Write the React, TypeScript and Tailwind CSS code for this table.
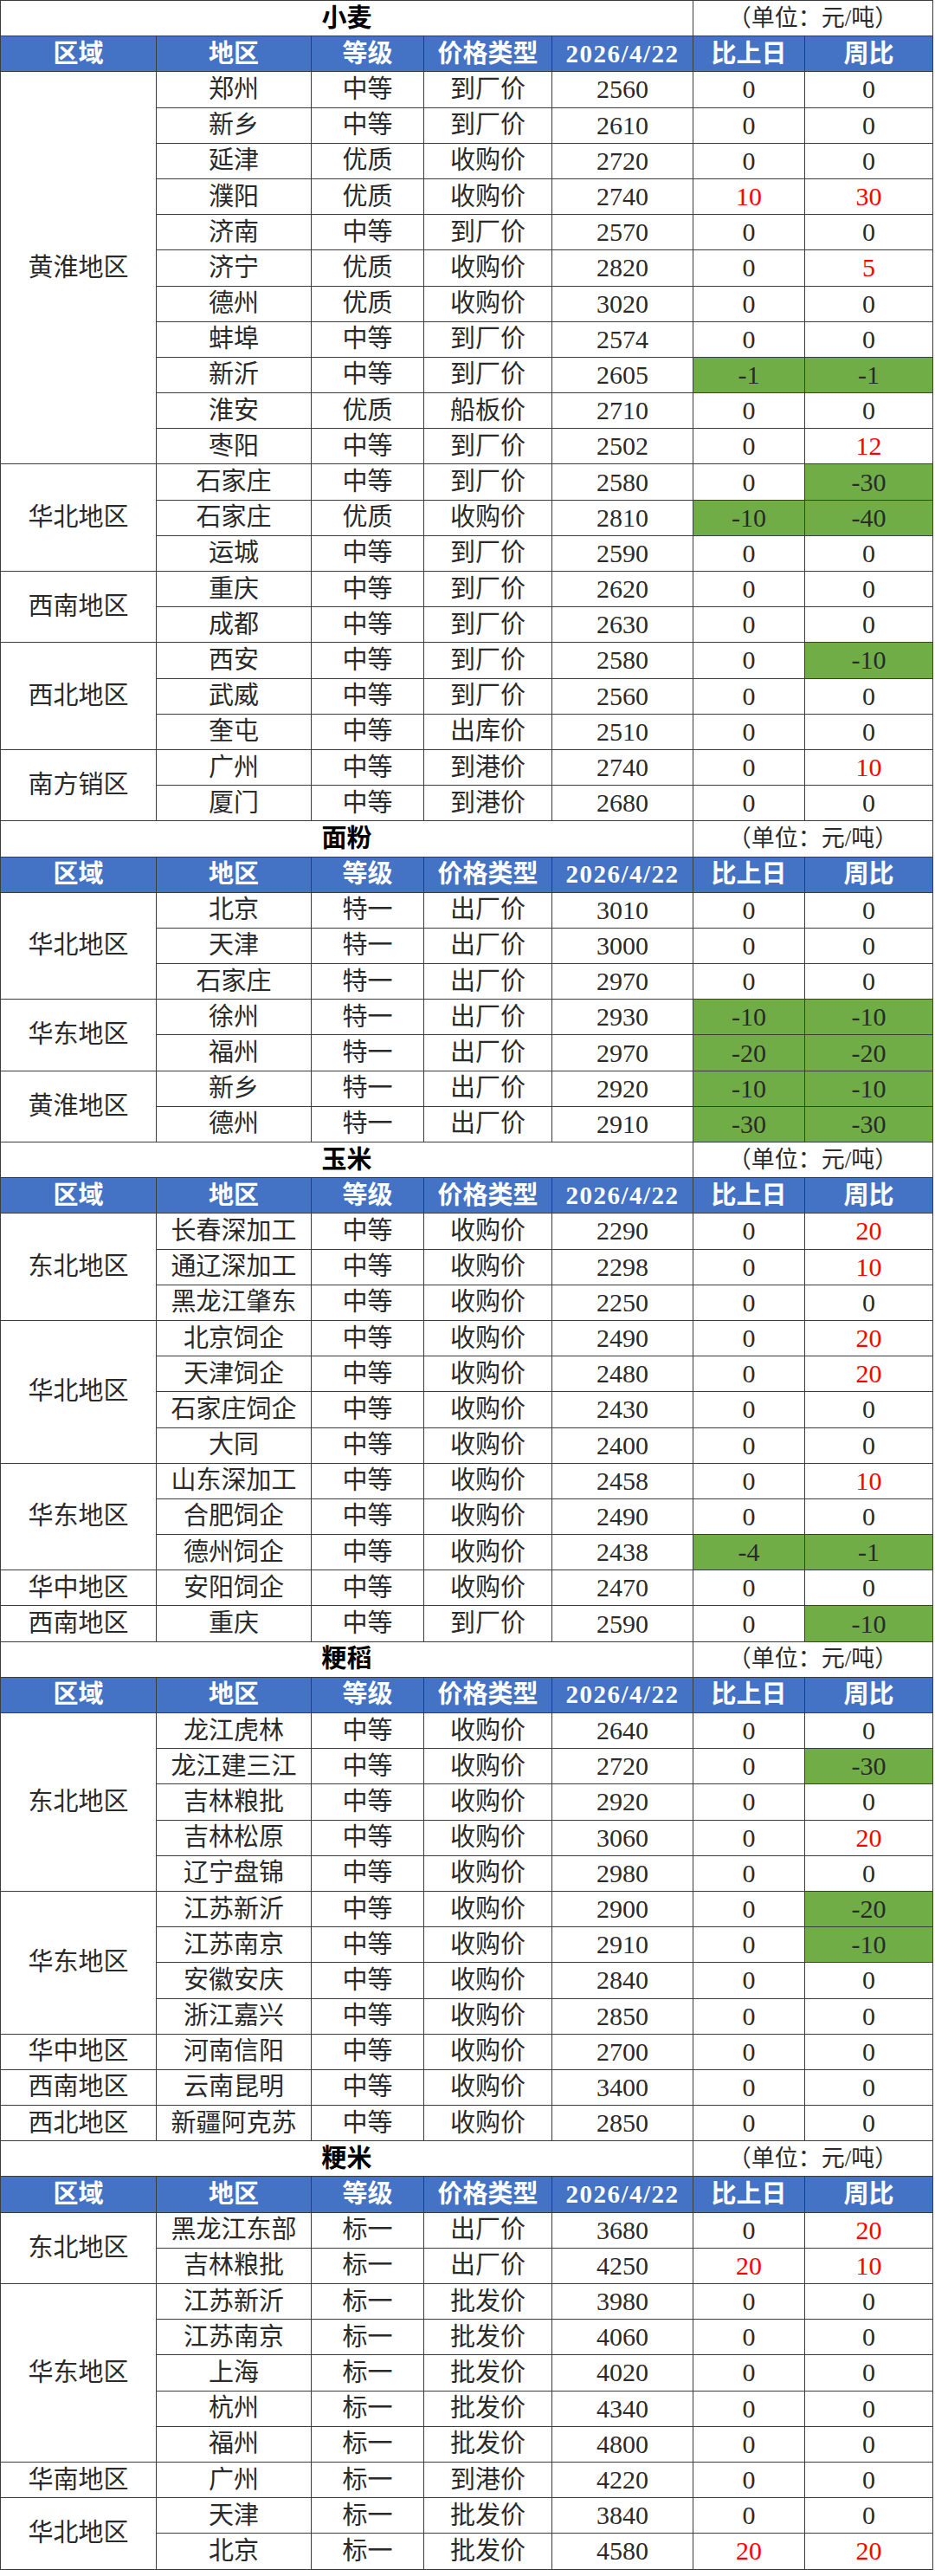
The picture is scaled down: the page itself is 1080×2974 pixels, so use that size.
import React from "react";

type Row = [string, string, string, number, number, number];
type Group = { region: string; rows: Row[] };
type Section = { title: string; groups: Group[] };

const sections: Section[] = [
  {
    title: "小麦",
    groups: [
      {
        region: "黄淮地区",
        rows: [
          ["郑州", "中等", "到厂价", 2560, 0, 0],
          ["新乡", "中等", "到厂价", 2610, 0, 0],
          ["延津", "优质", "收购价", 2720, 0, 0],
          ["濮阳", "优质", "收购价", 2740, 10, 30],
          ["济南", "中等", "到厂价", 2570, 0, 0],
          ["济宁", "优质", "收购价", 2820, 0, 5],
          ["德州", "优质", "收购价", 3020, 0, 0],
          ["蚌埠", "中等", "到厂价", 2574, 0, 0],
          ["新沂", "中等", "到厂价", 2605, -1, -1],
          ["淮安", "优质", "船板价", 2710, 0, 0],
          ["枣阳", "中等", "到厂价", 2502, 0, 12],
        ],
      },
      {
        region: "华北地区",
        rows: [
          ["石家庄", "中等", "到厂价", 2580, 0, -30],
          ["石家庄", "优质", "收购价", 2810, -10, -40],
          ["运城", "中等", "到厂价", 2590, 0, 0],
        ],
      },
      {
        region: "西南地区",
        rows: [
          ["重庆", "中等", "到厂价", 2620, 0, 0],
          ["成都", "中等", "到厂价", 2630, 0, 0],
        ],
      },
      {
        region: "西北地区",
        rows: [
          ["西安", "中等", "到厂价", 2580, 0, -10],
          ["武威", "中等", "到厂价", 2560, 0, 0],
          ["奎屯", "中等", "出库价", 2510, 0, 0],
        ],
      },
      {
        region: "南方销区",
        rows: [
          ["广州", "中等", "到港价", 2740, 0, 10],
          ["厦门", "中等", "到港价", 2680, 0, 0],
        ],
      },
    ],
  },
  {
    title: "面粉",
    groups: [
      {
        region: "华北地区",
        rows: [
          ["北京", "特一", "出厂价", 3010, 0, 0],
          ["天津", "特一", "出厂价", 3000, 0, 0],
          ["石家庄", "特一", "出厂价", 2970, 0, 0],
        ],
      },
      {
        region: "华东地区",
        rows: [
          ["徐州", "特一", "出厂价", 2930, -10, -10],
          ["福州", "特一", "出厂价", 2970, -20, -20],
        ],
      },
      {
        region: "黄淮地区",
        rows: [
          ["新乡", "特一", "出厂价", 2920, -10, -10],
          ["德州", "特一", "出厂价", 2910, -30, -30],
        ],
      },
    ],
  },
  {
    title: "玉米",
    groups: [
      {
        region: "东北地区",
        rows: [
          ["长春深加工", "中等", "收购价", 2290, 0, 20],
          ["通辽深加工", "中等", "收购价", 2298, 0, 10],
          ["黑龙江肇东", "中等", "收购价", 2250, 0, 0],
        ],
      },
      {
        region: "华北地区",
        rows: [
          ["北京饲企", "中等", "收购价", 2490, 0, 20],
          ["天津饲企", "中等", "收购价", 2480, 0, 20],
          ["石家庄饲企", "中等", "收购价", 2430, 0, 0],
          ["大同", "中等", "收购价", 2400, 0, 0],
        ],
      },
      {
        region: "华东地区",
        rows: [
          ["山东深加工", "中等", "收购价", 2458, 0, 10],
          ["合肥饲企", "中等", "收购价", 2490, 0, 0],
          ["德州饲企", "中等", "收购价", 2438, -4, -1],
        ],
      },
      { region: "华中地区", rows: [["安阳饲企", "中等", "收购价", 2470, 0, 0]] },
      { region: "西南地区", rows: [["重庆", "中等", "到厂价", 2590, 0, -10]] },
    ],
  },
  {
    title: "粳稻",
    groups: [
      {
        region: "东北地区",
        rows: [
          ["龙江虎林", "中等", "收购价", 2640, 0, 0],
          ["龙江建三江", "中等", "收购价", 2720, 0, -30],
          ["吉林粮批", "中等", "收购价", 2920, 0, 0],
          ["吉林松原", "中等", "收购价", 3060, 0, 20],
          ["辽宁盘锦", "中等", "收购价", 2980, 0, 0],
        ],
      },
      {
        region: "华东地区",
        rows: [
          ["江苏新沂", "中等", "收购价", 2900, 0, -20],
          ["江苏南京", "中等", "收购价", 2910, 0, -10],
          ["安徽安庆", "中等", "收购价", 2840, 0, 0],
          ["浙江嘉兴", "中等", "收购价", 2850, 0, 0],
        ],
      },
      { region: "华中地区", rows: [["河南信阳", "中等", "收购价", 2700, 0, 0]] },
      { region: "西南地区", rows: [["云南昆明", "中等", "收购价", 3400, 0, 0]] },
      { region: "西北地区", rows: [["新疆阿克苏", "中等", "收购价", 2850, 0, 0]] },
    ],
  },
  {
    title: "粳米",
    groups: [
      {
        region: "东北地区",
        rows: [
          ["黑龙江东部", "标一", "出厂价", 3680, 0, 20],
          ["吉林粮批", "标一", "出厂价", 4250, 20, 10],
        ],
      },
      {
        region: "华东地区",
        rows: [
          ["江苏新沂", "标一", "批发价", 3980, 0, 0],
          ["江苏南京", "标一", "批发价", 4060, 0, 0],
          ["上海", "标一", "批发价", 4020, 0, 0],
          ["杭州", "标一", "批发价", 4340, 0, 0],
          ["福州", "标一", "批发价", 4800, 0, 0],
        ],
      },
      { region: "华南地区", rows: [["广州", "标一", "到港价", 4220, 0, 0]] },
      {
        region: "华北地区",
        rows: [
          ["天津", "标一", "批发价", 3840, 0, 0],
          ["北京", "标一", "批发价", 4580, 20, 20],
        ],
      },
    ],
  },
];

const headers = ["区域", "地区", "等级", "价格类型", "2026/4/22", "比上日", "周比"];

const cell = "border border-[#3c3c3c] text-center align-middle p-0 whitespace-nowrap";

function changeCls(v: number) {
  if (v > 0) return "text-[#ff0000]";
  if (v < 0) return "bg-[#70ad47]";
  return "";
}

function SectionRows({ section }: { section: Section }) {
  return (
    <>
      <tr className="h-[41.2px]">
        <td colSpan={5} className={`${cell} font-bold text-black`}>{section.title}</td>
        <td colSpan={2} className={`${cell} text-[27px]`}>（单位：元/吨）</td>
      </tr>
      <tr className="h-[41.2px] bg-[#4472c4] text-white font-bold">
        {headers.map((h) => (
          <td key={h} className={`${cell} ${h === "2026/4/22" ? "tracking-[1.5px]" : ""}`}>{h}</td>
        ))}
      </tr>
      {section.groups.map((g) =>
        g.rows.map((r, i) => (
          <tr key={g.region + i} className="h-[41.2px]">
            {i === 0 && (
              <td rowSpan={g.rows.length} className={cell}>{g.region}</td>
            )}
            <td className={cell}>{r[0]}</td>
            <td className={cell}>{r[1]}</td>
            <td className={cell}>{r[2]}</td>
            <td className={`${cell} text-[30px]`}>{r[3]}</td>
            <td className={`${cell} text-[30px] ${changeCls(r[4])}`}>{r[4]}</td>
            <td className={`${cell} text-[30px] ${changeCls(r[5])}`}>{r[5]}</td>
          </tr>
        ))
      )}
    </>
  );
}

export default function App() {
  return (
    <div className="w-[1080px] bg-white">
      <table
        className="w-[1077px] table-fixed border-collapse text-[29px] leading-none text-[#2a2a2a]"
        style={{ fontFamily: '"Liberation Serif", "Noto Sans CJK SC", serif' }}
      >
        <colgroup>
          <col className="w-[180px]" />
          <col className="w-[179px]" />
          <col className="w-[130px]" />
          <col className="w-[148px]" />
          <col className="w-[163px]" />
          <col className="w-[129px]" />
          <col className="w-[148px]" />
        </colgroup>
        <tbody>
          {sections.map((s) => (
            <SectionRows key={s.title} section={s} />
          ))}
        </tbody>
      </table>
    </div>
  );
}
